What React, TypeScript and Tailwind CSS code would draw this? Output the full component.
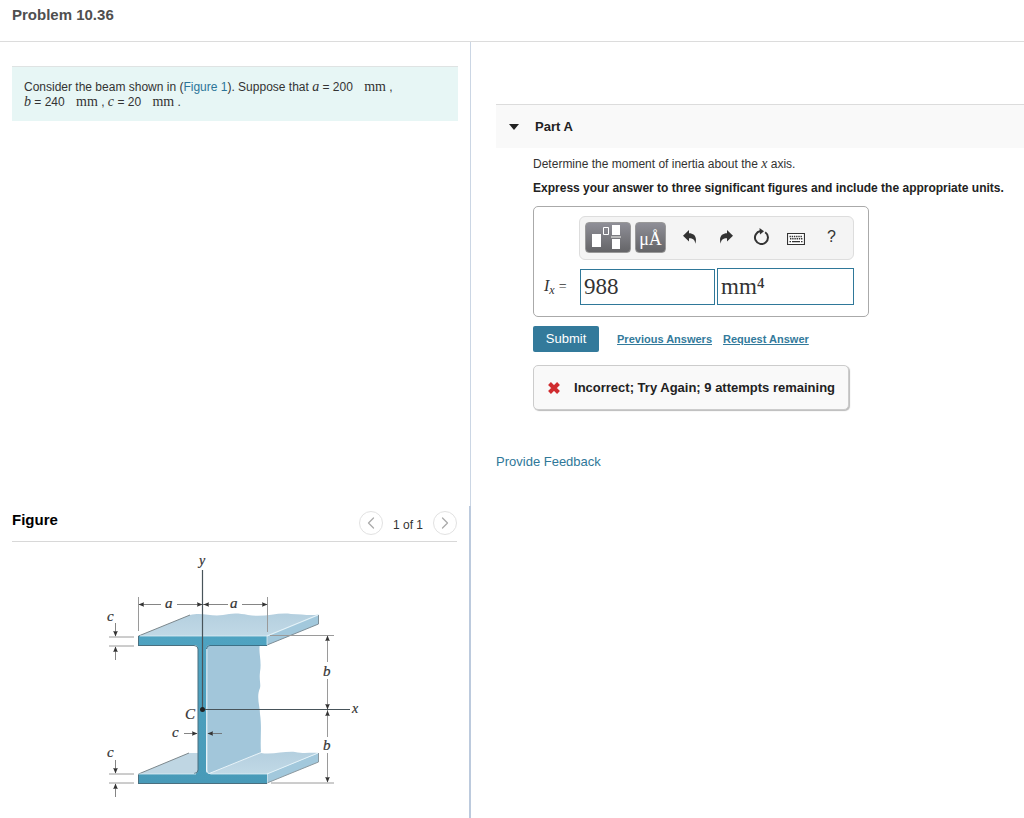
import React from 'react';
import { ChevronLeft, ChevronRight } from 'lucide-react';

const Var = ({ children }: { children: React.ReactNode }) => (
  <i className="font-['Liberation_Serif',serif] text-sm leading-none">{children}</i>
);

const Unit = () => (
  <span className="ml-2 font-['Liberation_Serif',serif] text-sm leading-none">mm</span>
);

const Header = () => (
  <header className="border-b border-[#dcdcdc] px-3 pt-1 pb-4">
    <h1 className="text-[15px] leading-[21px] font-bold text-[#4f4f4f]">Problem 10.36</h1>
  </header>
);

const ProblemStatement = () => (
  <section className="min-h-[464px] border-r border-[#cbd6e4] pt-6 pr-3 pl-3">
    <p className="border-t border-[#dfe3e3] bg-[#e7f6f5] px-3 pt-[13px] pb-[11px] text-xs leading-[15px] text-[#333]">
      Consider the beam shown in (<a href="#figure" className="text-[#2c7599]">Figure 1</a>). Suppose that <Var>a</Var> = 200 <Unit /> ,
      <br />
      <Var>b</Var> = 240 <Unit /> , <Var>c</Var> = 20 <Unit /> .
    </p>
  </section>
);

type Arrow = { x: number; y: number; turn: number };

const arrows: Arrow[] = [
  { x: 138, y: 604, turn: 180 },
  { x: 202, y: 604, turn: 0 },
  { x: 203, y: 604, turn: 180 },
  { x: 267, y: 604, turn: 0 },
  { x: 115, y: 636, turn: 90 },
  { x: 115, y: 646, turn: -90 },
  { x: 115, y: 773, turn: 90 },
  { x: 115, y: 783, turn: -90 },
  { x: 197, y: 733, turn: 0 },
  { x: 207, y: 733, turn: 180 },
  { x: 327, y: 635, turn: -90 },
  { x: 327, y: 709, turn: 90 },
  { x: 327, y: 710, turn: -90 },
  { x: 327, y: 782, turn: 90 },
];

const BeamDrawing = () => (
  <svg viewBox="100 550 270 255" className="ml-[88px] block w-[270px]" role="img" aria-label="Wide-flange beam section">
    <defs>
      <linearGradient id="flange" x1="0" y1="0" x2="0" y2="1">
        <stop offset="0" stopColor="#b4cfdf" />
        <stop offset="1" stopColor="#c1d9e6" />
      </linearGradient>
      <linearGradient id="edge" x1="0" y1="0" x2="0" y2="1">
        <stop offset="0" stopColor="#4fa3c1" />
        <stop offset="1" stopColor="#489ab8" />
      </linearGradient>
    </defs>

    {/* web side */}
    <path d="M206 644H260C258 652 262 660 260 672C259 680 261 684 260 688C256 697 260 706 260 714C262 728 260 738 261 753L207 776Z" fill="#a2c6da" />

    {/* bottom flange */}
    <path d="M138.500 774L189 753H200V774Z" fill="#bfd6e3" />
    <path d="M138.500 774L189 753" stroke="#7c878c" fill="none" />
    <path d="M208 774L261 753C272 755 285 751 295 752C305 754 311 752 318.500 753L267 774Z" fill="url(#flange)" />
    <path d="M208 774L261 752.500" stroke="#e8f3f8" fill="none" />
    <path d="M267 774L318.500 753V762L267 783Z" fill="#a2c8dc" />
    <path d="M267 783L318.500 762V753" stroke="#8b989f" fill="none" />
    <path d="M267 783V774L318 753" stroke="#e4f2f8" fill="none" />

    {/* top flange */}
    <path d="M138.500 636L190 615C203 612 211 617 223 615C231 613 239 613 248 615C264 618 277 612 291 614C302 614 309 616 318.500 614.500L267 636Z" fill="url(#flange)" />
    <path d="M138.500 636L190 615" stroke="#7c878c" fill="none" />
    <path d="M267 636L318.500 614.500V624L267 645Z" fill="#a2c8dc" />
    <path d="M267 645L318.500 624V615" stroke="#7e8e97" fill="none" />

    {/* cut face */}
    <path d="M138 636H267V645H210Q206 645 206 649V770Q206 774 210 774H267V783H138V774H194Q198 774 198 770V649Q198 645 194 645H138Z" fill="url(#edge)" />
    <path d="M267 645.500H210Q206.500 645.500 206.500 649" stroke="#3d7187" fill="none" />
    <path d="M138 645.500H194Q198 645.500 198 649V770Q198 773.500 194 773.500M138 783.500H267" stroke="#4a6f7f" fill="none" />
    <path d="M138.500 636V645M138.500 774V783" stroke="#4a6f7f" fill="none" />
    <path d="M207 649V770Q207 774 211 774H267M138 774H196M140 636H267V645" stroke="#dceef5" strokeWidth=".8" fill="none" />
    <path d="M267 636L318 615" stroke="#e4f2f8" strokeWidth="1.200" fill="none" />

    {/* extension and dimension lines */}
    <g stroke="#9a9a9a" fill="none">
      <path d="M138.500 597V631M267.500 597V632M109 637H134M109 646H134M109 774H134M109 783H134M270 635.500H334M271 783H334" />
      <path d="M327.500 636V662M327.500 679V737M327.500 753V782" />
    </g>
    <g stroke="#666" strokeWidth=".8" fill="none">
      <path d="M139 604.500H161M177 604.500H228M242 604.500H267M115.500 623V636M115.500 647V660M115.500 760V773M115.500 784V797M184 733.500H197M208 733.500H222" />
    </g>

    {/* axes */}
    <path d="M202.500 570V709.500M202.500 709.500H350" stroke="#48545a" strokeWidth="1.200" fill="none" />
    <circle cx="202.500" cy="709.500" r="2.500" fill="#222" />
    {arrows.map(({ x, y, turn }) => (
      <path key={`${x}-${y}`} d="M0 0L-5.500 -2.300L-5 0L-5.500 2.300Z" transform={`translate(${x + 0.5} ${y + 0.5}) rotate(${turn})`} fill="#333" />
    ))}

    <g className="font-['Liberation_Serif',serif] text-[15px] italic" fill="#333" stroke="#333" strokeWidth=".2">
      <text x="199" y="565" className="text-[14px]">y</text>
      <text x="165" y="608">a</text>
      <text x="230" y="608">a</text>
      <text x="107" y="621">c</text>
      <text x="107" y="757">c</text>
      <text x="172" y="737">c</text>
      <text x="185" y="719">C</text>
      <text x="323" y="676">b</text>
      <text x="323" y="750">b</text>
      <text x="352" y="713" className="text-[14px]">x</text>
    </g>
  </svg>
);

const FigurePanel = () => (
  <section id="figure" className="grow border-r-2 border-[#bccadd] pr-3 pl-3">
    <div className="flex items-center justify-between border-b border-[#d8d8d8] pt-[5px] pb-[6px]">
      <h2 className="pb-[7px] text-[15px] leading-4 font-bold text-black">Figure</h2>
      <div className="flex items-center gap-[10px]">
        <button aria-label="Previous figure" className="flex size-6 items-center justify-center rounded-full border border-[#e2e2e2] text-[#aaa]">
          <ChevronLeft className="size-5 shrink-0" strokeWidth={1.5} />
        </button>
        <span className="pt-[3px] text-xs text-[#333]">1 of 1</span>
        <button aria-label="Next figure" className="flex size-6 items-center justify-center rounded-full border border-[#e2e2e2] text-[#aaa]">
          <ChevronRight className="size-5 shrink-0" strokeWidth={1.5} />
        </button>
      </div>
    </div>
    <div className="pt-2">
      <BeamDrawing />
    </div>
  </section>
);

const Toolbar = () => (
  <div className="flex h-11 items-center rounded-md border border-[#ddd] bg-[#f4f4f4] pb-[2px] pl-[5px] text-[#333]">
    <button aria-label="Templates" className="flex h-[31px] w-[46px] shrink-0 items-center justify-center rounded border border-[#999] bg-linear-to-b from-[#8f8f97] to-[#656568]">
      <svg viewBox="0 0 46 31" className="h-[31px] w-[46px] shrink-0">
        <path d="M7 12H16V25H7ZM27 3H35V13H27ZM27 17H35V27H27Z" fill="#fff" />
        <path d="M18.500 5.500H23.500V12.500H18.500Z" fill="none" stroke="#fff" />
        <path d="M26 15H36" stroke="#bbb" strokeWidth="2" />
      </svg>
    </button>
    <button className="ml-1 h-[31px] w-[31px] shrink-0 rounded border border-[#999] bg-linear-to-b from-[#8f8f97] to-[#656568] pt-[3px] font-['Liberation_Serif',serif] text-lg leading-6 text-white">
      <span className="flex justify-center">μÅ</span>
    </button>
    <button aria-label="Undo" className="ml-[17px]">
      <svg viewBox="0 0 14 14" className="size-[14px]" fill="currentColor">
        <path d="M6 0V3.200C11 3.200 14.500 6.500 12.300 13.800C12 10 10 8.300 6 8.300V11.500L0 5.700Z" />
      </svg>
    </button>
    <button aria-label="Redo" className="ml-[22px]">
      <svg viewBox="0 0 14 14" className="size-[14px]" fill="currentColor">
        <path d="M8 0V3.200C3 3.200 -.5 6.500 1.700 13.800C2 10 4 8.300 8 8.300V11.500L14 5.700Z" />
      </svg>
    </button>
    <button aria-label="Reset" className="ml-[19px]">
      <svg viewBox="0 0 18 18" className="size-[18px]">
        <path d="M13.200 4.200A6.500 6.500 0 1 1 8.500 3.100" fill="none" stroke="currentColor" strokeWidth="2" />
        <path d="M7.500 0L12 3.300L8 6.500Z" fill="currentColor" />
      </svg>
    </button>
    <button aria-label="Keyboard shortcuts" className="ml-[17px]">
      <svg viewBox="0 0 18 12" className="mt-1 h-3 w-[18px]">
        <path d="M.5.5H17.500V11.500H.5Z" fill="#fff" stroke="currentColor" strokeWidth="1.200" />
        <path d="M2.500 3.500H15.500M3 5.800H15.500" stroke="currentColor" strokeWidth="1.500" strokeDasharray="1.400 .8" />
        <path d="M2.500 8.700H4M5 8.700H13M14 8.700H15.500" stroke="currentColor" strokeWidth="1.300" />
      </svg>
    </button>
    <button aria-label="Help" className="ml-[22px] text-base leading-4">?</button>
  </div>
);

const AnswerBox = () => (
  <div className="mt-[10px] w-[336px] rounded-[5px] border border-[#aaa] pt-[9px] pr-[14px] pb-[11px] pl-[10px]">
    <div className="pl-[35px]">
      <Toolbar />
    </div>
    <div className="mt-2 flex items-end">
      <label htmlFor="value" className="w-9 shrink-0 self-center font-['Liberation_Serif',serif] text-base leading-4 text-[#333]">
        <i>I</i>
        <sub className="text-xs italic">x</sub>
        <span className="ml-1 text-sm">=</span>
      </label>
      <input id="value" defaultValue="988" className="h-9 w-[135px] shrink-0 border border-[#2f7899] bg-white px-[3px] font-['Liberation_Serif',serif] text-[23px] text-[#333]" />
      <input aria-label="Units" defaultValue="mm⁴" className="ml-[2px] h-[37px] min-w-0 grow border border-[#2f7899] bg-white px-[3px] font-['Liberation_Serif',serif] text-[23px] text-[#333]" />
    </div>
  </div>
);

const PartA = () => (
  <main className="grow pt-[62px] pl-[25px]">
    <div className="flex h-11 items-center border-t border-[#dcdcdc] bg-[#f9f9f9] pl-[13px]">
      <button aria-label="Collapse Part A" className="mr-4">
        <svg viewBox="0 0 10 6" className="h-[6px] w-[10px]" fill="#222">
          <path d="M0 0H10L5 6Z" />
        </svg>
      </button>
      <h2 className="text-[13px] font-bold text-[#222]">Part A</h2>
    </div>
    <div className="pt-2 pl-[37px] text-xs text-[#333]">
      <p>
        Determine the moment of inertia about the <Var>x</Var> axis.
      </p>
      <p className="mt-2 font-bold text-[#222]">Express your answer to three significant figures and include the appropriate units.</p>
      <AnswerBox />
      <div className="mt-[9px] flex items-center">
        <button className="h-[26px] w-[66px] rounded-[2px] bg-[#337a9b] text-[13px] text-white">Submit</button>
        <a href="#previous" className="ml-[18px] text-[11px] font-bold text-[#337a9b] underline">Previous Answers</a>
        <a href="#request" className="ml-[11px] text-[11px] font-bold text-[#337a9b] underline">Request Answer</a>
      </div>
      <div className="mt-[13px] flex h-[45px] w-fit items-center rounded-[5px] border border-[#ccc] bg-[#f9f9f9] px-[13px] shadow-[1px_1px_1px_#bbb]">
        <svg viewBox="0 0 14 14" className="mr-[13px] size-[14px]">
          <path d="M2.500 2.500L11.500 11.500M11.500 2.500L2.500 11.500" stroke="#d02c2f" strokeWidth="4" />
        </svg>
        <span className="text-[13px] font-bold text-[#222]">Incorrect; Try Again; 9 attempts remaining</span>
      </div>
    </div>
    <a href="#feedback" className="mt-[42px] block w-fit text-[13px] text-[#2f7899]">Provide Feedback</a>
  </main>
);

const App = () => {
  return (
    <div className="flex min-h-screen flex-col bg-white font-['Liberation_Sans',Arial,sans-serif]">
      <Header />
      <div className="flex grow">
        <div className="flex w-[46%] shrink-0 flex-col">
          <ProblemStatement />
          <FigurePanel />
        </div>
        <PartA />
      </div>
    </div>
  );
};

export default App;
